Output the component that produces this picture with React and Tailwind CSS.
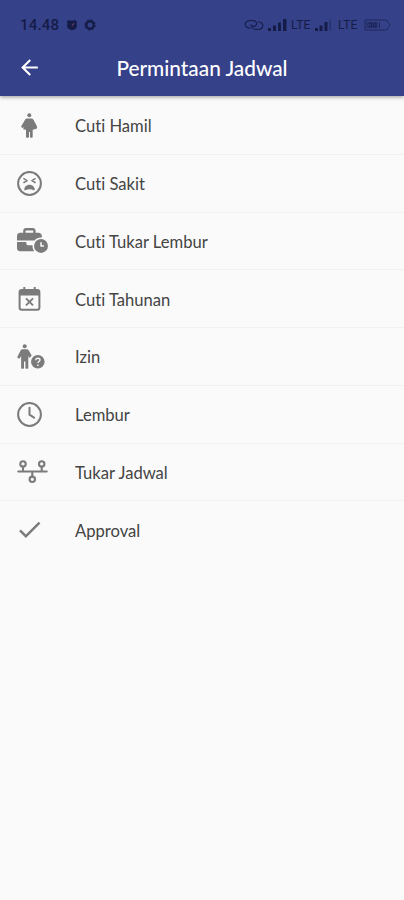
import React from 'react';
import { MdArrowBack, MdCheck } from 'react-icons/md';
import { FaBusinessTime } from 'react-icons/fa6';

const PregnantIcon = () => (
  <svg className="ml-[4px]" width="17" height="25" viewBox="0 0 17 25" fill="currentColor">
    <circle cx="8.300" cy="2.200" r="2" />
    <path d="M6 5.500h4.600c.8 0 1.300.3 1.700.9l3.500 6.600c.7 1.500.2 2.800-1.200 3.100l-2.900.7v7c0 .6-.4.900-1 .9H10c-.6 0-1-.3-1-.9V19H8v4.800c0 .6-.4.900-1 .9H6c-.6 0-1-.3-1-.9v-7L2.800 16.600c-.4 0-.6-.3-.5-.7l.5-2-.6.7c-.3.4-.7.4-1.100.1l-.6-.5c-.4-.3-.4-.7-.1-1.100l3.800-6.500c.4-.7 1-1.100 1.800-1.100z" />
  </svg>
);

const SickIcon = () => (
  <svg width="25" height="25" viewBox="0 0 25 25" fill="none" stroke="currentColor" strokeWidth="2">
    <circle cx="12.500" cy="12.500" r="11.400" />
    <path
      d="M6.900 7.700l3.200 1.900-3.200 1.900M18.100 7.700l-3.200 1.900 3.200 1.900"
      strokeWidth="1.500"
      strokeLinecap="round"
      strokeLinejoin="round"
    />
    <path
      d="M12.500 13.800c-3 0-5.200 2.200-5.200 4.700 0 .8.600 1 1.200.7 2.400-1.300 5.600-1.300 8 0 .6.300 1.200.1 1.200-.7 0-2.500-2.200-4.700-5.200-4.700z"
      fill="currentColor"
      stroke="none"
    />
  </svg>
);

const CalendarXIcon = () => (
  <svg className="ml-[1px]" width="23" height="25" viewBox="0 0 23 25" fill="none" stroke="currentColor" strokeWidth="2">
    <rect x="1.600" y="4" width="19.800" height="19.700" rx="2.200" />
    <path d="M1.600 5.500a1.800 1.800 0 0 1 1.800-1.800h16.200a1.800 1.800 0 0 1 1.800 1.800v4H1.600z" fill="currentColor" stroke="none" />
    <path d="M6.300 1v4M16.700 1v4" />
    <path d="M8 12.400l7 7M15 12.400l-7 7" strokeWidth="1.900" />
  </svg>
);

const PersonQuestionIcon = () => (
  <svg width="29" height="25" viewBox="0 0 29 25" fill="currentColor">
    <circle cx="7.700" cy="2.200" r="2" />
    <path d="M5.800 5.300h3.800c1 0 1.700.4 2.200 1.200l2.900 5-1.700 1.900-.5.500-1.200-2v12c0 .5-.3.800-.8.800H9.200c-.5 0-.8-.3-.8-.8v-6.500H7v6.500c0 .5-.3.800-.8.800H4.900c-.5 0-.8-.3-.8-.8V12l-1.300 2.200c-.2.400-.6.500-1 .2l-1.200-.7c-.4-.2-.5-.6-.2-1l3.200-6.100c.5-.9 1.200-1.300 2.200-1.300z" />
    <circle cx="20.800" cy="17.800" r="6.800" />
    <path
      d="M18.800 16.200c0-1.200.9-1.900 2.100-1.900s2.100.7 2.100 1.800c0 1.500-2.100 1.400-2.100 3M20.900 20.600v1.400"
      fill="none"
      stroke="#fafafa"
      strokeWidth="1.400"
    />
  </svg>
);

const ClockIcon = () => (
  <svg width="25" height="25" viewBox="0 0 25 25" fill="none" stroke="currentColor" strokeWidth="2">
    <circle cx="12.500" cy="12.500" r="11.400" />
    <path d="M12.500 5.700v7l4.500 3" strokeLinecap="round" strokeLinejoin="round" />
  </svg>
);

const TimelineIcon = () => (
  <svg width="31" height="25" viewBox="0 0 31 25" fill="none" stroke="currentColor" strokeWidth="2.100">
    <circle cx="6" cy="4.900" r="2.700" />
    <circle cx="24.700" cy="4.900" r="2.700" />
    <circle cx="15.300" cy="20.300" r="2.700" />
    <path d="M1.300 12.500h28.400M6 7.500v5M24.700 7.500v5M15.300 12.500v5" strokeLinecap="round" />
  </svg>
);

const menuItems = [
  { label: 'Cuti Hamil', icon: <PregnantIcon /> },
  { label: 'Cuti Sakit', icon: <SickIcon /> },
  { label: 'Cuti Tukar Lembur', icon: <FaBusinessTime className="h-[25px] w-[31px]" /> },
  { label: 'Cuti Tahunan', icon: <CalendarXIcon /> },
  { label: 'Izin', icon: <PersonQuestionIcon /> },
  { label: 'Lembur', icon: <ClockIcon /> },
  { label: 'Tukar Jadwal', icon: <TimelineIcon /> },
  { label: 'Approval', icon: <MdCheck className="-ml-[2px] h-[29px] w-[29px]" /> },
];

const StatusBar = () => (
  <div className="flex h-[48px] items-center justify-between pl-5 pr-[13px] pt-[2px] text-[#151c48]">
    <div className="flex items-center">
      <span className="w-[46px] font-['Roboto',sans-serif] text-[15px] font-medium tracking-[0.200px]">14.48</span>
      <svg width="12" height="12" viewBox="0 0 12 12" fill="currentColor">
        <circle cx="6" cy="6.4" r="4.9" />
        <path d="M.7 3 3 .7l1.4 1.4-2.3 2.3zM11.3 3 9 .7 7.6 2.1l2.3 2.3z" />
        <path d="M6 6.5 8 4.4" stroke="#6a4168" strokeWidth="1.1" />
      </svg>
      <svg className="ml-[6px]" width="12" height="12" viewBox="0 0 12 12" fill="none" stroke="currentColor">
        <circle cx="6" cy="6" r="3.7" strokeWidth="2.4" />
        <circle cx="6" cy="6" r="5.2" strokeWidth="1" strokeDasharray="2 2.08" />
      </svg>
    </div>
    <div className="flex items-center font-['Roboto',sans-serif] text-[12px]">
      <svg width="20" height="12" viewBox="0 0 20 12" fill="none" stroke="currentColor" strokeWidth="1.100">
        <path d="M6.500 9.300C3 9 1 7.500 1.200 5.200 1.500 2.800 4 1.500 7.400 1.500c3.200 0 5.200 1.300 5.200 3.100 0 1.700-1.500 2.800-3.300 2.800-1.600 0-2.500-.8-2.500-1.900" />
        <path d="M14 2.700c3 .3 4.800 1.700 4.800 3.800 0 2.600-2.300 4-5.600 4-3.200 0-5.200-1.300-5.200-3" />
      </svg>
      <svg className="ml-[4px]" width="19" height="12" viewBox="0 0 19 12" fill="currentColor">
        <path d="M0 9h3v3H0zM5 6.500h3V12H5zM10 3.500h3V12h-3zM15 0h3.500v12H15z" />
      </svg>
      <span className="ml-[4px] w-[24px] tracking-[0.300px]">LTE</span>
      <svg width="17" height="12" viewBox="0 0 17 12" fill="currentColor">
        <path d="M0 9h3v3H0zM4.500 6.500h3V12h-3zM9.500 3h3v9h-3z" />
        <path d="M14.500.5h1.500v11h-1.500z" opacity=".45" />
      </svg>
      <span className="ml-[6px] w-[26px] tracking-[0.300px]">LTE</span>
      <svg width="27" height="12" viewBox="0 0 27 12" fill="none" stroke="currentColor" strokeWidth="1">
        <path d="M1 1h21.500l3.500 5-3.500 5H1z" opacity=".65" />
        <path d="M2 3h12v6H2z" fill="currentColor" stroke="none" opacity=".35" />
        <path d="M4.500 4h3v4h-3M9.500 4H12v4H9.500zM15.500 3v6" opacity=".7" />
      </svg>
    </div>
  </div>
);

const App = () => {
  return (
    <div className="min-h-[900px] w-full bg-[#fafafa] font-['Lato',sans-serif] [font-variant-ligatures:none]">
      <header className="relative h-[96px] bg-[#354189] shadow-[0_1px_4px_rgba(0,0,0,0.4)]">
        <StatusBar />
        <div className="grid h-[39px] grid-cols-[60px_1fr_60px] items-center text-white">
          <MdArrowBack className="ml-[17px] h-[25px] w-[25px]" />
          <h1 className="text-center text-[20.800px] font-medium">Permintaan Jadwal</h1>
        </div>
      </header>

      <ul className="pt-[1px]">
        {menuItems.map((item) => (
          <li
            key={item.label}
            className="flex h-[57.750px] items-center border-b border-[#f1f1f1] last:border-transparent"
          >
            <div className="flex w-[75px] shrink-0 items-center pl-[17px] text-[#7b7b7b]">{item.icon}</div>
            <span className="pt-[3px] text-[16.600px] text-[#444444]">{item.label}</span>
          </li>
        ))}
      </ul>
    </div>
  );
};

export default App;
